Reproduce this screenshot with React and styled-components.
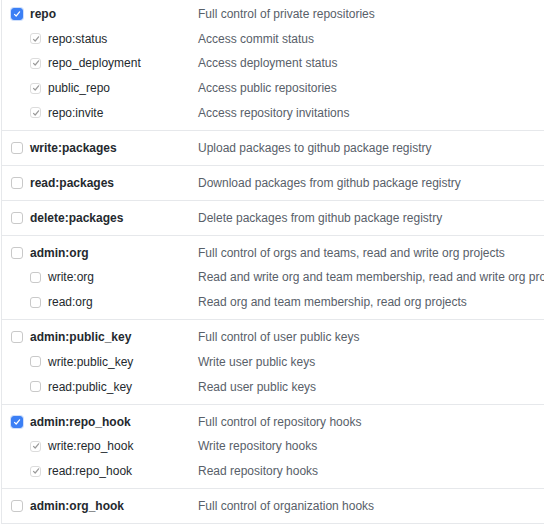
import styled, { createGlobalStyle } from 'styled-components';

const GlobalStyle = createGlobalStyle`
  html, body {
    margin: 0;
    background: #fff;
    overflow: hidden;
  }
  body {
    font-family: "Liberation Sans", Arial, sans-serif;
    -webkit-font-smoothing: antialiased;
  }
`;

const scopes = [
  {
    name: 'repo', desc: 'Full control of private repositories', checked: true,
    children: [
      ['repo:status', 'Access commit status'],
      ['repo_deployment', 'Access deployment status'],
      ['public_repo', 'Access public repositories'],
      ['repo:invite', 'Access repository invitations'],
    ],
  },
  { name: 'write:packages', desc: 'Upload packages to github package registry' },
  { name: 'read:packages', desc: 'Download packages from github package registry' },
  { name: 'delete:packages', desc: 'Delete packages from github package registry' },
  {
    name: 'admin:org', desc: 'Full control of orgs and teams, read and write org projects',
    children: [
      ['write:org', 'Read and write org and team membership, read and write org projects'],
      ['read:org', 'Read org and team membership, read org projects'],
    ],
  },
  {
    name: 'admin:public_key', desc: 'Full control of user public keys',
    children: [
      ['write:public_key', 'Write user public keys'],
      ['read:public_key', 'Read user public keys'],
    ],
  },
  {
    name: 'admin:repo_hook', desc: 'Full control of repository hooks', checked: true,
    children: [
      ['write:repo_hook', 'Write repository hooks'],
      ['read:repo_hook', 'Read repository hooks'],
    ],
  },
  { name: 'admin:org_hook', desc: 'Full control of organization hooks' },
];

// List wrapper
const ScopeList = styled.div`
  margin: -3px 0 0 1px;
  width: 760px;
  border-left: 1px solid #e6e8eb;
`;

const Group = styled.div`
  padding: 4.6px 0;
  border-bottom: 1px solid #e6e8eb;
`;

const Row = styled.div`
  display: grid;
  grid-template-columns: 196px 1fr;
  align-items: center;
  height: 24.75px;
`;

const Label = styled.label`
  display: flex;
  align-items: center;
  gap: ${({ $child }) => ($child ? '7px' : '7px')};
  padding-left: ${({ $child }) => ($child ? '28px' : '9px')};
  font-size: 12px;
  font-weight: ${({ $child }) => ($child ? 400 : 700)};
  color: #24292e;
  white-space: nowrap;
`;

const Desc = styled.span`
  font-size: 12px;
  color: #586069;
  white-space: nowrap;
`;

// Checkbox
const Box = styled.span`
  box-sizing: border-box;
  width: ${({ $child }) => ($child ? '11px' : '12px')};
  height: ${({ $child }) => ($child ? '11px' : '12px')};
  border-radius: 3px;
  display: flex;
  align-items: center;
  justify-content: center;
  flex-shrink: 0;
  background: ${({ $on, $child }) => ($on && !$child ? '#3b7ff5' : '#fff')};
  border: 1px solid ${({ $on, $child }) =>
    $on && !$child ? '#3b7ff5' : $child && $on ? '#dcdcdc' : '#c9c9c9'};
  box-shadow: ${({ $on, $child }) =>
    $on && !$child ? '0 0 0 1px rgba(59,127,245,0.25)' : 'none'};
`;

const Check = ({ color }) => (
  <svg width="8" height="8" viewBox="0 0 8 8">
    <path d="M1.5 4.3 L3.2 6 L6.6 1.8" fill="none" stroke={color} strokeWidth="1.2"
      strokeLinecap="round" strokeLinejoin="round" />
  </svg>
);

const Checkbox = ({ on, child }) => (
  <Box $on={on} $child={child}>
    {on && <Check color={child ? '#9a9a9a' : '#fff'} />}
  </Box>
);

const App = () => (
  <>
    <GlobalStyle />
    <ScopeList>
      {scopes.map((s) => (
        <Group key={s.name}>
          <Row>
            <Label>
              <Checkbox on={s.checked} />
              {s.name}
            </Label>
            <Desc>{s.desc}</Desc>
          </Row>
          {(s.children || []).map(([name, desc]) => (
            <Row key={name}>
              <Label $child>
                <Checkbox on={s.checked} child />
                {name}
              </Label>
              <Desc>{desc}</Desc>
            </Row>
          ))}
        </Group>
      ))}
    </ScopeList>
  </>
);

export default App;
